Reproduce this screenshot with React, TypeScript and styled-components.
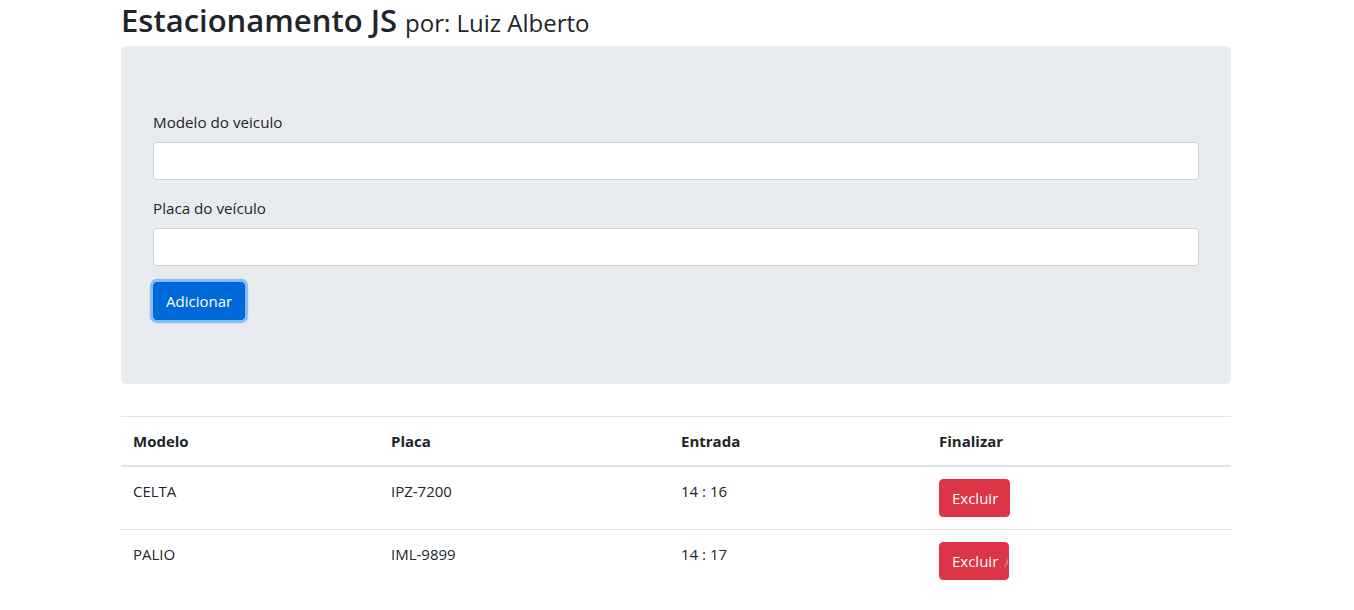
import styled, {createGlobalStyle} from 'styled-components';

interface Vehicle {
	modelo: string;
	placa: string;
	entrada: string;
	tail?: boolean;
}

const vehicles: Vehicle[] = [
	{modelo: 'CELTA', placa: 'IPZ-7200', entrada: '14 : 16'},
	{modelo: 'PALIO', placa: 'IML-9899', entrada: '14 : 17', tail: true},
];

const GlobalStyle = createGlobalStyle`
	* {
		box-sizing: border-box;
	}
	body {
		margin: 0;
		font-family: "Open Sans", "Noto Sans", sans-serif;
		font-size: 16px;
		line-height: 24px;
		color: #212529;
		background: #fff;
	}
`;

const Container = styled.div`
	width: 1110px;
	margin: 0 0 0 121px;
`;

const Title = styled.h2`
	margin: 0 0 8px;
	height: 38px;
	font-size: 31px;
	font-weight: 600;
	line-height: 40px;

	small {
		font-size: 24px;
		font-weight: 400;
	}
`;

const Jumbotron = styled.div`
	background-color: #e9ecef;
	border-radius: 4.8px;
	padding: 64px 32px;
	margin-bottom: 32px;
`;

const FormGroup = styled.div`
	margin-bottom: 16px;
`;

const Label = styled.label`
	display: inline-block;
	margin-bottom: 8px;
	font-size: 15.2px;
	line-height: 24px;
`;

const Input = styled.input`
	display: block;
	width: 100%;
	height: 38px;
	padding: 6px 12px;
	font-size: 16px;
	border: 1px solid #ced4da;
	border-radius: 4px;
	background: #fff;
	outline: none;
`;

const Button = styled.button<{$variant: 'primary' | 'danger'; $width?: number}>`
	display: inline-flex;
	align-items: center;
	justify-content: ${p => (p.$variant === 'danger' && p.$width ? 'flex-start' : 'center')};
	height: 38px;
	padding: 0 12px;
	width: ${p => (p.$width ? `${p.$width}px` : 'auto')};
	overflow: hidden;
	white-space: nowrap;
	font-family: inherit;
	font-size: 15px;
	border-radius: 4px;
	color: #fff;
	cursor: pointer;
	border: 1px solid ${p => (p.$variant === 'primary' ? '#0062cc' : '#dc3545')};
	background-color: ${p => (p.$variant === 'primary' ? '#0069d9' : '#dc3545')};
	box-shadow: ${p => (p.$variant === 'primary' ? '0 0 0 3.2px rgba(38, 143, 255, 0.5)' : 'none')};

	span {
		color: rgba(255, 255, 255, 0.35);
		margin-left: 6px;
	}
`;

const Table = styled.table`
	width: 100%;
	border-collapse: collapse;
	font-size: 15px;

	th,
	td {
		padding: 12px;
		text-align: left;
		vertical-align: top;
		border-top: 1px solid #dee2e6;
		line-height: 24px;
	}

	thead th {
		font-weight: 700;
		border-bottom: 2px solid #dee2e6;
	}
`;

const Col = styled.col<{$w: number}>`
	width: ${p => p.$w}px;
`;

export default function App() {
	return (
		<>
			<GlobalStyle />
			<Container>
				<Title>
					Estacionamento JS <small>por: Luiz Alberto</small>
				</Title>
				<Jumbotron>
					<FormGroup>
						<Label>Modelo do veiculo</Label>
						<Input type="text" />
					</FormGroup>
					<FormGroup>
						<Label>Placa do veículo</Label>
						<Input type="text" />
					</FormGroup>
					<Button $variant="primary">Adicionar</Button>
				</Jumbotron>
				<Table>
					<colgroup>
						<Col $w={258} />
						<Col $w={290} />
						<Col $w={258} />
						<Col $w={304} />
					</colgroup>
					<thead>
						<tr>
							<th>Modelo</th>
							<th>Placa</th>
							<th>Entrada</th>
							<th>Finalizar</th>
						</tr>
					</thead>
					<tbody>
						{vehicles.map(v => (
							<tr key={v.placa}>
								<td>{v.modelo}</td>
								<td>{v.placa}</td>
								<td>{v.entrada}</td>
								<td>
									<Button $variant="danger" $width={v.tail ? 70 : 71}>
										Excluir{v.tail && <span>A</span>}
									</Button>
								</td>
							</tr>
						))}
					</tbody>
				</Table>
			</Container>
		</>
	);
}
